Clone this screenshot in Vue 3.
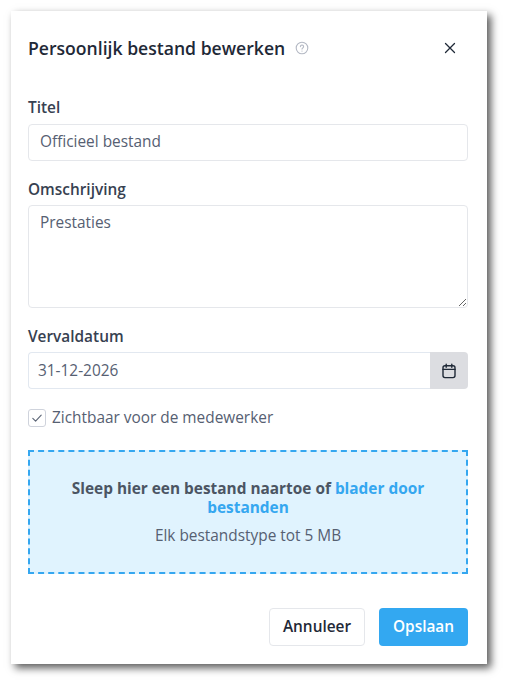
<script setup>
const title = 'Persoonlijk bestand bewerken'
</script>

<template>
  <div class="page">
    <section class="modal">
      <header class="head">
        <h1>{{ title }}</h1>
        <svg class="help" viewBox="0 0 14 14" width="14" height="14" fill="none" stroke="#b4b9c4" stroke-width="1.1" stroke-linecap="round">
          <circle cx="7" cy="7" r="5.8" />
          <path d="M5.4 5.6a1.6 1.6 0 1 1 2.4 1.4c-.5.3-.8.6-.8 1.1" />
          <path d="M7 10v.1" />
        </svg>
        <svg class="close" viewBox="0 0 12 12" width="12" height="12" fill="none" stroke="#1f2937" stroke-width="1.3" stroke-linecap="round">
          <path d="M1.5 1.5l9 9M10.5 1.5l-9 9" />
        </svg>
      </header>

      <label class="label first">Titel</label>
      <input class="field" type="text" value="Officieel bestand" />

      <label class="label second">Omschrijving</label>
      <textarea class="field area">Prestaties</textarea>

      <label class="label third">Vervaldatum</label>
      <div class="date">
        <input class="date-input" type="text" value="31-12-2026" />
        <span class="addon">
          <svg viewBox="0 0 16 16" width="16" height="16" fill="none" stroke="#1f2937" stroke-width="1.4" stroke-linecap="round">
            <rect x="2" y="2.8" width="12" height="11.8" rx="2" />
            <path d="M2 6.4h12M5.2 1.2v3M10.8 1.2v3" />
          </svg>
        </span>
      </div>

      <div class="check">
        <span class="box">
          <svg viewBox="0 0 12 12" width="12" height="12" fill="none" stroke="#5b6475" stroke-width="1.1" stroke-linecap="round" stroke-linejoin="round">
            <path d="M1.8 6.4l2.8 2.8 5.6-6" />
          </svg>
        </span>
        <span class="check-text">Zichtbaar voor de medewerker</span>
      </div>

      <div class="drop">
        <p class="drop-main">Sleep hier een bestand naartoe of <span class="link">blader door bestanden</span></p>
        <p class="drop-sub">Elk bestandstype tot 5 MB</p>
      </div>

      <footer class="foot">
        <button class="btn ghost" type="button">Annuleer</button>
        <button class="btn primary" type="button">Opslaan</button>
      </footer>
    </section>
  </div>
</template>

<style scoped>
.page {
  width: 506px;
  height: 683px;
  box-sizing: border-box;
  padding: 11px 19px 19px 11px;
  font-family: "Open Sans", "Noto Sans", sans-serif;
  color: #4b5563;
}
.modal {
  width: 476px;
  height: 653px;
  box-sizing: border-box;
  padding: 0 19px 0 17px;
  background: #fff;
  box-shadow: 4px 4px 8px rgba(0, 0, 0, 0.65);
  display: flex;
  flex-direction: column;
}
.head {
  display: flex;
  align-items: center;
  height: 28px;
  margin-top: 23px;
}
h1 {
  margin: 0;
  font-size: 17.6px;
  line-height: 28px;
  font-weight: 600;
  color: #1f2937;
}
.help {
  margin-left: 10px;
}
.close {
  margin-left: auto;
  margin-right: 12px;
}
.label {
  display: block;
  font-size: 15.4px;
  line-height: 20px;
  font-weight: 600;
  color: #374151;
}
.first { margin-top: 36px; }
.second { margin-top: 19px; }
.third { margin-top: 19px; }
.second + .field,
.third + .date {
  margin-top: 5px;
}
.field {
  display: block;
  width: 440px;
  box-sizing: border-box;
  margin: 6px 0 0;
  height: 37px;
  padding: 0 11px 2px;
  border: 1px solid #e5e7eb;
  border-radius: 4px;
  font: 400 15.4px/20px "Open Sans", "Noto Sans", sans-serif;
  color: #566072;
  background: #fff;
  outline: none;
}
.area {
  height: 103px;
  padding: 7px 11px;
  resize: vertical;
}
.date {
  display: flex;
  width: 440px;
  height: 37px;
  margin-top: 6px;
}
.date-input {
  flex: 1;
  min-width: 0;
  box-sizing: border-box;
  padding: 0 9px;
  border: 1px solid #e2e8f0;
  border-right: 0;
  border-radius: 4px 0 0 4px;
  font: 400 15.4px/20px "Open Sans", "Noto Sans", sans-serif;
  color: #566072;
  outline: none;
}
.addon {
  width: 38px;
  display: flex;
  align-items: center;
  justify-content: center;
  background: #dcdde1;
  border-radius: 0 4px 4px 0;
}
.check {
  display: flex;
  align-items: center;
  gap: 6px;
  margin-top: 19px;
  height: 20px;
  font-size: 15.4px;
  color: #566072;
}
.check-text {
  margin-top: -1px;
}
.box {
  width: 18px;
  height: 18px;
  box-sizing: border-box;
  border: 1px solid #cfd3dc;
  border-radius: 3px;
  display: flex;
  align-items: center;
  justify-content: center;
}
.drop {
  width: 440px;
  height: 124px;
  box-sizing: border-box;
  margin-top: 22px;
  padding: 27px 16px 0;
  border: 2px dashed #35a7f0;
  background: #e0f3fe;
  text-align: center;
}
.drop p {
  margin: 0;
  font-size: 15.4px;
}
.drop-main {
  font-weight: 700;
  line-height: 19px;
  color: #4b5563;
}
.link {
  color: #35a7f0;
}
.drop-sub {
  margin-top: 9px !important;
  line-height: 20px;
  color: #566072;
}
.foot {
  display: flex;
  justify-content: flex-end;
  gap: 14px;
  margin-top: 34px;
}
.btn {
  height: 38px;
  box-sizing: border-box;
  border-radius: 4px;
  font: 600 15.4px/20px "Open Sans", "Noto Sans", sans-serif;
  padding: 0;
}
.ghost {
  width: 96px;
  background: #fff;
  border: 1px solid #e5e7eb;
  color: #1f2937;
}
.primary {
  width: 89px;
  background: #33a8f1;
  border: 0;
  color: #fff;
}
</style>
